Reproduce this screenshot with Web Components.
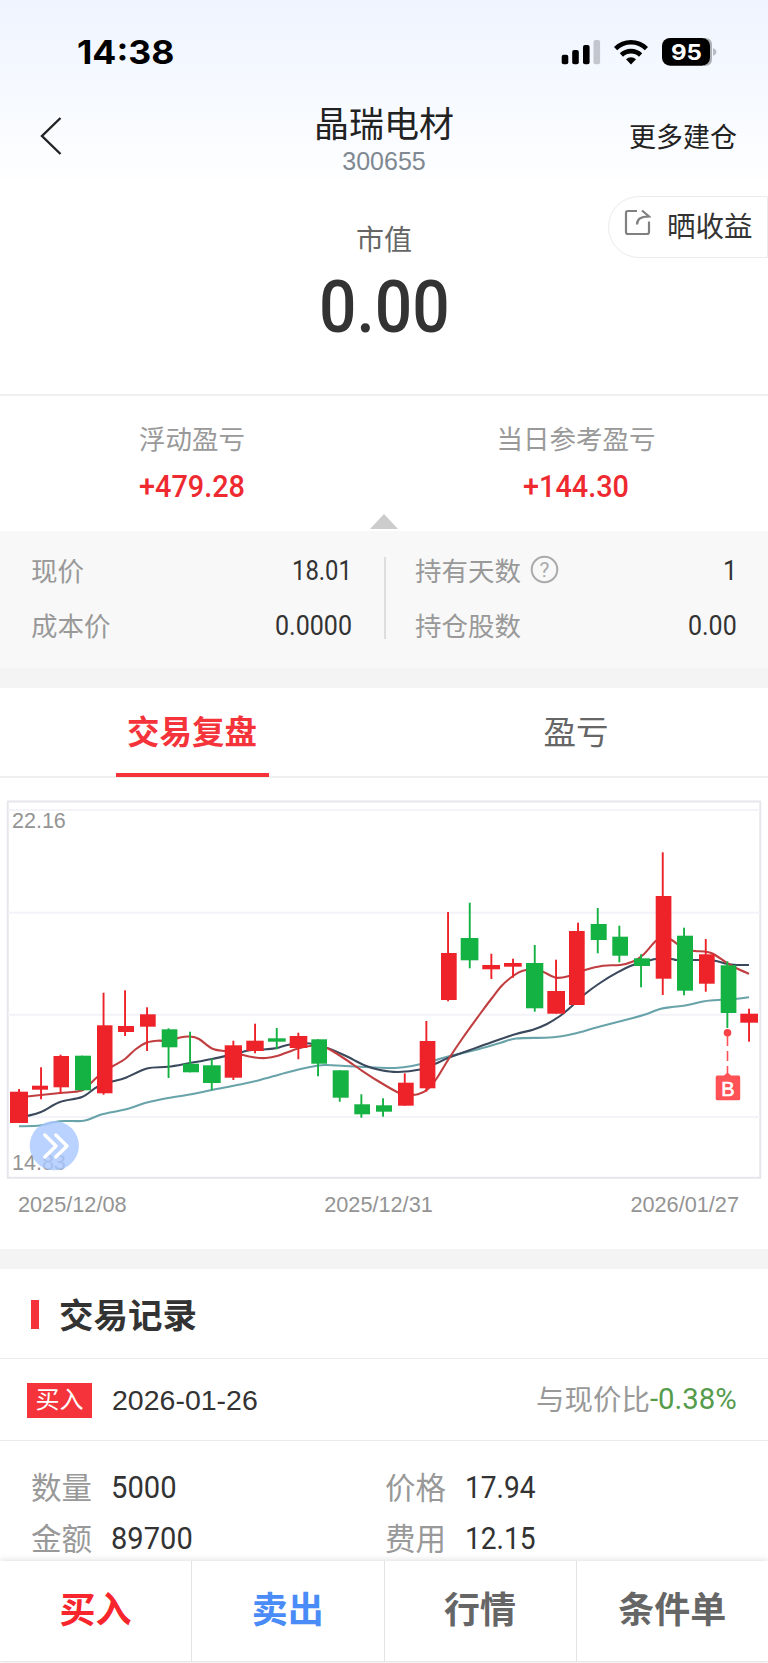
<!DOCTYPE html>
<html lang="zh-CN">
<head>
<meta charset="utf-8">
<meta name="viewport" content="width=device-width, initial-scale=1">
<title>晶瑞电材 300655</title>
<style>
  :root {
    --red: #f5333a;
    --up: #ee232a;
    --down: #14b143;
    --text: #333;
    --muted: #999;
    --line: #ebebeb;
  }
  body {
    margin: 0;
    width: 768px;
    height: 1663px;
    overflow: hidden;
    background: #fff;
    color: var(--text);
    font-family: "Liberation Sans", "Noto Sans CJK SC", sans-serif;
  }
</style>
</head>
<body>
<position-page></position-page>

<script>
const CANDLES = [
  // left, width, wick x, high, body top, body bottom, low, direction
  [10, 18, 19, 1089, 1091.7, 1123, 1123, 'up'],
  [32, 16, 41, 1067.3, 1085.7, 1089.7, 1099.3, 'up'],
  [53.5, 15.5, 60.5, 1054.7, 1056, 1087.3, 1094, 'up'],
  [75, 16, 82, 1055.7, 1055.7, 1090.3, 1090.3, 'down'],
  [97, 15.5, 103.5, 992.7, 1025.3, 1093.3, 1094.7, 'up'],
  [118, 16, 125, 990.3, 1026, 1032, 1036, 'up'],
  [140, 15.7, 147, 1007.3, 1014.3, 1026.7, 1051, 'up'],
  [161.7, 15.7, 168.5, 1028.3, 1029.3, 1047.3, 1078, 'down'],
  [183, 16, 190, 1031.7, 1063.7, 1072.3, 1072.3, 'down'],
  [203, 17.7, 211.7, 1058.7, 1065.3, 1083, 1090, 'down'],
  [224.7, 17.3, 233.3, 1040.7, 1045.3, 1077.7, 1080, 'up'],
  [246.3, 17.4, 255, 1023.7, 1040.7, 1051, 1053.3, 'up'],
  [268, 17.7, 276.7, 1028, 1038.3, 1041.7, 1049.3, 'down'],
  [289.7, 17.6, 298.3, 1032.7, 1036, 1048, 1059.3, 'up'],
  [311.3, 15.7, 318, 1039.3, 1039.3, 1063.7, 1076.3, 'down'],
  [332.7, 16, 339.7, 1070.3, 1070.3, 1097.7, 1101.7, 'down'],
  [354.3, 15.7, 361.3, 1094.3, 1104.3, 1114.3, 1117.7, 'down'],
  [376, 16, 383, 1098.3, 1105.3, 1111.7, 1116.7, 'down'],
  [398, 15.7, 404.7, 1073.3, 1082.7, 1105.7, 1105.7, 'up'],
  [419.7, 15.7, 426.3, 1021, 1041, 1088.3, 1091.7, 'up'],
  [441, 15.7, 448, 912, 953, 1000, 1001.3, 'up'],
  [460.7, 17.7, 469.7, 902.7, 938, 960.3, 968.3, 'down'],
  [482.3, 17.7, 491.3, 953.7, 965, 969.3, 979, 'up'],
  [504, 17.7, 513, 958.7, 963, 966.7, 977.7, 'up'],
  [526, 17.3, 534.7, 945, 963, 1008.3, 1011.7, 'down'],
  [547.3, 17.7, 556, 959.7, 991, 1013.7, 1013.7, 'up'],
  [569, 15.7, 578, 922.7, 931, 1005, 1005, 'up'],
  [590.7, 16, 597.7, 908, 924, 940, 953.3, 'down'],
  [612.3, 15.7, 619.3, 925.7, 936.7, 955.7, 962.3, 'down'],
  [634, 16, 641, 954.3, 958.3, 966, 987.3, 'down'],
  [655.7, 15.7, 662.7, 852.3, 896, 978.7, 995, 'up'],
  [677, 16, 684, 927.7, 935.7, 990.7, 995.3, 'down'],
  [699, 15.7, 705.7, 939, 954.3, 983.7, 991.7, 'up'],
  [720.7, 15.7, 727.3, 961.3, 965.3, 1013, 1028, 'down'],
  [740.3, 17.7, 749, 1008.7, 1013.7, 1022.7, 1041.7, 'up']
];

const AVERAGES = [
  {
    color: '#68a3a9',
    points: [[19, 1126.3], [40, 1125.5], [55, 1122], [65, 1121], [82, 1121], [90, 1119], [103, 1114], [125, 1109.5], [147, 1102.5], [168, 1098], [190, 1094.5], [212, 1090], [240, 1084.5], [260, 1080], [285, 1073], [310, 1067], [325, 1065], [345, 1066], [375, 1067.5], [395, 1068], [412, 1066], [436, 1060], [450, 1056], [475, 1050], [500, 1043], [516, 1038.5], [545, 1037.7], [560, 1036.5], [575, 1033.5], [600, 1026.5], [633, 1018], [645, 1014.5], [660, 1009], [672, 1007], [685, 1005.5], [703, 1001.5], [714, 1000.3], [737, 998.7], [749, 997.3]]
  },
  {
    color: '#3b495d',
    points: [[19, 1117.5], [27, 1116], [41, 1112], [60, 1102], [82, 1097], [97, 1087], [112, 1081.5], [125, 1078], [147, 1068.5], [168, 1066.8], [190, 1063], [212, 1059], [234, 1054], [250, 1050.3], [266, 1049.3], [277, 1048], [290, 1044.5], [310, 1043.5], [327, 1048], [345, 1055.5], [365, 1065.5], [380, 1070], [398, 1072], [420, 1069.5], [436, 1063.5], [448, 1058], [470, 1050], [491, 1042.5], [516, 1034], [533, 1029.7], [547, 1024], [560, 1016], [569, 1008.7], [585, 994], [600, 983], [617, 972.7], [633, 965], [650, 960.3], [656, 959], [671.7, 959], [677, 960], [696, 960], [715, 960.7], [727, 964], [737, 965], [749, 965]]
  },
  {
    color: '#c13e40',
    points: [[19, 1097.5], [27, 1096.5], [41, 1095], [60, 1093], [82, 1090.5], [92, 1082], [103, 1072], [113, 1066], [125, 1059], [136, 1049], [147, 1042.5], [158, 1040.7], [170, 1041], [180, 1037.5], [190, 1036.5], [199, 1039], [212, 1048.5], [225, 1051], [234, 1051.5], [243, 1055], [255, 1057.5], [266, 1058], [277, 1056], [298, 1048.5], [310, 1046], [320, 1045], [329, 1049], [345, 1059], [361, 1070], [378, 1081], [397, 1092], [405, 1094.5], [418, 1094.3], [428, 1089], [437, 1078], [448, 1060], [462, 1039], [480, 1014], [492, 998], [502, 985.5], [513, 976], [522, 971], [534, 969], [543, 971.7], [556, 977.7], [569, 976], [585, 970], [603, 965.7], [620, 965], [633, 961.5], [643, 955], [656, 940.7], [664, 937], [671.7, 940], [684, 948.5], [695, 951], [704, 951.5], [713, 953.7], [727, 963], [737, 968.5], [749, 973.7]]
  }
];

// Catmull-Rom through the points, written as cubic segments
function smoothPath(points) {
  let d = `M${points[0]}`;
  for (let i = 0; i < points.length - 1; i++) {
    const p0 = points[i - 1] ?? points[i];
    const p1 = points[i];
    const p2 = points[i + 1];
    const p3 = points[i + 2] ?? p2;
    const c1 = [p1[0] + (p2[0] - p0[0]) / 6, p1[1] + (p2[1] - p0[1]) / 6];
    const c2 = [p2[0] - (p3[0] - p1[0]) / 6, p2[1] - (p3[1] - p1[1]) / 6];
    d += `C${c1} ${c2} ${p2}`;
  }
  return d;
}

function define(name, html) {
  const template = document.createElement('template');
  template.innerHTML = html;
  customElements.define(name, class extends HTMLElement {
    constructor() {
      super();
      this.attachShadow({ mode: 'open' }).append(template.content.cloneNode(true));
    }
  });
}

// Figures squeezed or stretched to a fixed width
class FitText extends HTMLElement {
  constructor() {
    super();
    this.attachShadow({ mode: 'open' }).innerHTML = `
      <style>
        :host { display: inline-block; white-space: nowrap; font-family: Roboto, sans-serif; }
        span { display: inline-block; transform-origin: 0 50%; }
      </style>
      <span><slot></slot></span>
    `;
  }

  connectedCallback() {
    const width = Number(this.getAttribute('width'));
    const span = this.shadowRoot.querySelector('span');
    this.style.width = `${width}px`;
    span.style.transform = `scaleX(${width / span.offsetWidth})`;
  }
}
customElements.define('fit-text', FitText);

define('status-bar', `
  <style>
    :host { display: flex; align-items: center; justify-content: space-between; height: 103px; padding: 0 51px 0 77px; box-sizing: border-box; color: #000; }
    fit-text { font: 700 33px/40px Inter, sans-serif; }
    svg { display: block; }
    text { font: 700 22px Inter, sans-serif; }
  </style>
  <fit-text width="97">14:38</fit-text>
  <svg width="156" height="30" viewBox="561 36 156 30">
    <rect x="561.7" y="53.7" width="6.6" height="9.6" rx="2"/>
    <rect x="572.2" y="49" width="6.6" height="14.3" rx="2"/>
    <rect x="583" y="44" width="6.6" height="19.3" rx="2"/>
    <rect x="593.5" y="39" width="6.6" height="24.3" rx="2" fill="#c3c6cd"/>
    <g fill="none" stroke="#000" stroke-width="4.6">
      <path d="M615.6 47.6a22 22 0 0 1 30.8 0"/>
      <path d="M621.4 54a13.8 13.8 0 0 1 19.2 0"/>
    </g>
    <path d="M631 63.4l-5-5.2a7.4 7.4 0 0 1 10 0z"/>
    <path d="M704 37h1q7 0 7 7v14q0 7-7 7h-1z" fill="#adb0b6"/>
    <rect x="662" y="37" width="48" height="27.7" rx="8"/>
    <path d="M713 47.3q3.4 1 3.4 3.7t-3.4 3.7z" fill="#b9bcc3"/>
    <text x="686.5" y="59" text-anchor="middle" textLength="31" lengthAdjust="spacingAndGlyphs" fill="#fff">95</text>
  </svg>
`);

define('nav-bar', `
  <style>
    :host { display: grid; grid-template-columns: 1fr auto 1fr; height: 75px; padding: 0 31px; color: #222; }
    svg { display: block; margin: 13px 0 0 9px; }
    .title { text-align: center; }
    .name { font-size: 35px; line-height: 44px; }
    .code { font-size: 25px; line-height: 28px; color: #808991; }
    .more { justify-self: end; font-size: 27px; line-height: 40px; margin-top: 15px; }
  </style>
  <svg width="22" height="40" viewBox="0 0 22 40" fill="none" stroke="#222" stroke-width="2.4"><path d="M20.5 2L2 20l18.5 18"/></svg>
  <div class="title">
    <div class="name"><slot name="name"></slot></div>
    <div class="code"><slot name="code"></slot></div>
  </div>
  <div class="more"><slot name="action"></slot></div>
`);

define('market-value', `
  <style>
    :host { display: block; position: relative; height: 216px; border-bottom: 2px solid #f0f0f0; text-align: center; }
    .label { padding-top: 43px; font-size: 28px; line-height: 40px; color: #666; }
    .value { height: 84px; margin-top: 4px; font-size: 73px; line-height: 84px; }
    fit-text { font-weight: 500; }
    .share {
      position: absolute; top: 18px; right: 0; width: 160px; height: 62px; box-sizing: border-box;
      display: flex; align-items: center; padding-left: 15px; gap: 16px;
      border: 1.5px solid #ebebeb; border-radius: 31px 0 0 31px; background: #fff;
      font-size: 28.5px; white-space: nowrap;
    }
    svg { flex: none; margin-top: -9px; }
    .share span { margin-top: -6px; }
  </style>
  <div class="label">市值</div>
  <div class="value"><fit-text width="131">0.00</fit-text></div>
  <div class="share">
    <svg width="27" height="27" viewBox="0 0 27 27" fill="none" stroke="#808080" stroke-width="2.2">
      <path d="M13 2H4Q2 2 2 4v19q0 2 2 2h19q2 0 2-2V12.500"/>
      <path d="M13 15.500q0-8 11.500-8M18 1.500L25 7.500l-6.500.5"/>
    </svg>
    <span>晒收益</span>
  </div>
`);

define('profit-item', `
  <style>
    :host { display: block; flex: 1; text-align: center; }
    .label { padding-top: 24px; font-size: 26.5px; line-height: 40px; color: var(--muted); }
    .value { margin-top: 9px; line-height: 36px; font-size: 30px; color: #ee2a30; }
  </style>
  <div class="label"><slot name="label"></slot></div>
  <div class="value"><slot></slot></div>
`);

define('profit-row', `
  <style>
    :host { display: flex; position: relative; height: 135px; }
    i { position: absolute; left: 370px; bottom: 2px; border: 14px solid transparent; border-top: 0; border-bottom: 15px solid #ccc; }
    fit-text { font: 500 31px/36px Roboto, sans-serif; }
  </style>
  <profit-item><span slot="label">浮动盈亏</span><fit-text width="106">+479.28</fit-text></profit-item>
  <profit-item><span slot="label">当日参考盈亏</span><fit-text width="106">+144.30</fit-text></profit-item>
  <i></i>
`);

define('info-panel', `
  <style>
    :host { display: flex; height: 137px; box-sizing: border-box; padding: 12px 31px 0; background: #f8f8f8; }
    .current { width: 321px; padding-right: 32px; }
    .held { flex: 1; padding-left: 29px; }
    .sep { width: 2px; height: 82px; margin-top: 14px; background: #dedede; }
    .row { display: flex; align-items: center; height: 55px; font-size: 26.5px; color: var(--muted); }
    .row span { margin-top: -3px; }
    .row fit-text { margin-left: auto; color: var(--text); font-size: 27px; }
    svg { margin: -2px 0 0 9px; }
    text { font: 21px Roboto, sans-serif; }
  </style>
  <div class="current">
    <div class="row"><span>现价</span><fit-text width="60">18.01</fit-text></div>
    <div class="row"><span>成本价</span><fit-text width="77">0.0000</fit-text></div>
  </div>
  <div class="sep"></div>
  <div class="held">
    <div class="row"><span>持有天数</span>
      <svg width="29" height="29" viewBox="0 0 29 29"><circle cx="14.5" cy="14.5" r="12.8" fill="none" stroke="#aaa" stroke-width="2"/><text x="14.5" y="22" text-anchor="middle" fill="#aaa">?</text></svg>
      <fit-text width="14">1</fit-text></div>
    <div class="row"><span>持仓股数</span><fit-text width="49">0.00</fit-text></div>
  </div>
`);

define('review-tabs', `
  <style>
    :host { display: flex; height: 90px; box-sizing: border-box; border-bottom: 2px solid #f0f0f0; }
    div { flex: 1; display: flex; justify-content: center; font-size: 32.5px; line-height: 90px; color: #666; }
    span { width: 153px; text-align: center; height: 85px; }
    .on span { color: var(--red); font-weight: 700; border-bottom: 4px solid var(--red); }
  </style>
  <div class="on"><span>交易复盘</span></div>
  <div><span>盈亏</span></div>
`);

class KlineChart extends HTMLElement {
  constructor() {
    super();
    this.attachShadow({ mode: 'open' });
  }

  connectedCallback() {
    const grid = [810, 912.7, 1014.7, 1117]
      .map((y) => `<path d="M8 ${y}H760" stroke="#f3f3f9" stroke-width="2"/>`).join('');
    const lines = AVERAGES
      .map((a) => `<path d="${smoothPath(a.points)}" fill="none" stroke="${a.color}" stroke-width="2.1"/>`).join('');
    const candles = CANDLES.map(([x, w, wx, high, top, bottom, low, dir]) => `
      <g fill="var(--${dir})">
        <rect x="${wx - 0.9}" y="${high}" width="1.9" height="${low - high}"/>
        <rect x="${x}" y="${top}" width="${w}" height="${bottom - top}"/>
      </g>`).join('');

    this.shadowRoot.innerHTML = `
      <style>
        :host { display: block; height: 471px; }
        svg { display: block; }
        .axis { font: 21.5px "Liberation Sans", sans-serif; fill: #949494; }
        .dates { display: flex; justify-content: space-between; padding: 3px 29px 0 18px; font: 21.7px/34px "Liberation Sans", sans-serif; color: #949494; }
        .tag { font: 20px "Liberation Sans", sans-serif; fill: #fff; stroke: #fff; stroke-width: .6; }
      </style>
      <svg width="768" height="407" viewBox="0 778 768 407">
        <rect x="7.7" y="801.5" width="752.6" height="376.3" fill="none" stroke="#e6e6ec" stroke-width="2"/>
        ${grid}
        ${lines}
        ${candles}
        <text class="axis" x="12" y="827.5">22.16</text>
        <text class="axis" x="12" y="1169.5">14.83</text>
        <path d="M727.5 1036V1074" stroke="#ff5257" stroke-width="1.6" stroke-dasharray="10 5"/>
        <circle cx="727.5" cy="1032.7" r="3.8" fill="#fb4247"/>
        <path d="M717.2 1075.5h6.8l3.5-3 3.5 3h7.7q1.5 0 1.5 1.5v21.7q0 1.5-1.5 1.5h-21.5q-1.5 0-1.5-1.5v-21.7q0-1.5 1.5-1.5z" fill="#ff5257"/>
        <text class="tag" x="728" y="1095.5" text-anchor="middle">B</text>
        <circle cx="54.3" cy="1145.7" r="24.6" fill="#a9c8ff" fill-opacity=".82"/>
        <path d="M44.8 1135L56 1146l-11.2 11M55.8 1135L67 1146l-11.2 11" fill="none" stroke="#fff" stroke-width="3.4" stroke-linecap="round" stroke-linejoin="round"/>
      </svg>
      <div class="dates"><span>2025/12/08</span><span>2025/12/31</span><span>2026/01/27</span></div>
    `;
  }
}
customElements.define('kline-chart', KlineChart);

define('trade-records', `
  <style>
    :host { display: block; }
    h2 { display: flex; align-items: center; gap: 20px; height: 89px; margin: 0; padding-left: 31px; border-bottom: 1.5px solid var(--line); font-size: 34.5px; }
    h2::before { content: ""; width: 8px; height: 29px; margin-top: 2px; background: var(--red); }
    h2 span { margin-top: -1px; }
    .head { display: flex; align-items: center; height: 81px; padding: 0 31px 0 27px; border-bottom: 1.5px solid var(--line); }
    .badge { width: 65px; height: 35px; margin-top: 1px; line-height: 34px; background: var(--red); color: #fff; font-size: 24px; text-align: center; }
    .date { margin: 1px 0 0 20px; font-size: 28.5px; }
    .diff { margin-left: auto; font-size: 28.5px; color: var(--muted); display: flex; align-items: center; }
    .diff span { margin-top: -5px; }
    .diff fit-text { color: #559b4c; font-size: 30px; margin-top: -2px; }
    .grid { display: grid; grid-template-columns: 354px 1fr; padding: 21px 31px 0; }
    .cell { display: flex; align-items: center; height: 51px; font-size: 30.5px; color: var(--muted); }
    .cell span { margin-top: -4px; }
    .cell fit-text { color: var(--text); margin-left: 19px; }
  </style>
  <h2><span>交易记录</span></h2>
  <div class="head">
    <div class="badge">买入</div>
    <div class="date">2026-01-26</div>
    <div class="diff"><span>与现价比</span><fit-text width="87">-0.38%</fit-text></div>
  </div>
  <div class="grid">
    <div class="cell"><span>数量</span><fit-text width="66">5000</fit-text></div>
    <div class="cell"><span>价格</span><fit-text width="71">17.94</fit-text></div>
    <div class="cell"><span>金额</span><fit-text width="82">89700</fit-text></div>
    <div class="cell"><span>费用</span><fit-text width="71">12.15</fit-text></div>
  </div>
`);

define('action-bar', `
  <style>
    :host { display: flex; position: relative; height: 100px; background: #fff; border-bottom: 1.5px solid #e6e6e6; box-shadow: 0 -1px 6px rgba(0, 0, 0, .13); }
    div { flex: 1; text-align: center; font-size: 36px; font-weight: 700; line-height: 99px; color: #666; }
    div + div { border-left: 1.5px solid #e3e3e3; }
    .buy { color: #f7262d; }
    .sell { color: #4a8cf7; }
  </style>
  <div class="buy">买入</div>
  <div class="sell">卖出</div>
  <div>行情</div>
  <div>条件单</div>
`);

define('position-page', `
  <style>
    :host { display: flex; flex-direction: column; height: 1663px; }
    header { background: linear-gradient(#eff4ff, #f5f9ff 45%, #fdfeff 100%); }
    main { height: 1383px; overflow: hidden; }
    .gap { height: 20px; background: #f4f4f4; }
  </style>
  <header>
    <status-bar></status-bar>
    <nav-bar>
      <span slot="name">晶瑞电材</span>
      <span slot="code">300655</span>
      <span slot="action">更多建仓</span>
    </nav-bar>
  </header>
  <main>
    <market-value></market-value>
    <profit-row></profit-row>
    <info-panel></info-panel>
    <div class="gap"></div>
    <review-tabs></review-tabs>
    <kline-chart></kline-chart>
    <div class="gap"></div>
    <trade-records></trade-records>
  </main>
  <action-bar></action-bar>
`);
</script>
</body>
</html>
